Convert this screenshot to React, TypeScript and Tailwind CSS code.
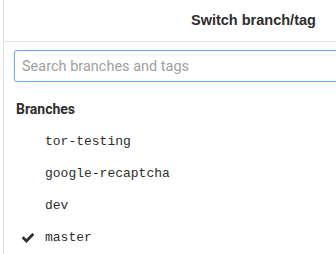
import React from 'react';

const branches = [
  { name: 'tor-testing', active: false },
  { name: 'google-recaptcha', active: false },
  { name: 'dev', active: false },
  { name: 'master', active: true },
];

// Desplegable de ramas/tags recortado por la derecha
export default function App() {
  return (
    <div className="w-[336px] h-[254px] bg-white overflow-hidden">
      <div className="ml-[3px] w-[500px] h-full border-l border-[#dfdfdf] text-[#2e2e2e]">
        {/* Cabecera */}
        <div className="h-[42px] border-b border-[#e5e5e5] flex items-center pl-[187px]">
          <span className="text-[14.5px] font-bold font-['Liberation_Sans',sans-serif]">Switch branch/tag</span>
        </div>

        {/* Buscador */}
        <div className="pt-[8px] pl-[10px]">
          <input
            type="text"
            placeholder="Search branches and tags"
            className="w-[480px] h-[32px] rounded-[3px] border border-[#73afea] px-[7px] text-[14.5px] font-['Roboto',sans-serif] placeholder:text-[#a0a0a0] outline-none shadow-[0_0_2px_rgba(115,175,234,0.4)]"
          />
        </div>

        {/* Lista */}
        <div className="pt-[17px] font-['Roboto',sans-serif]">
          <div className="pl-[12px] text-[14px] font-bold h-[20px] leading-[20px]">Branches</div>
          <ul className="pt-[7px]">
            {branches.map((b) => (
              <li key={b.name} className="h-[32px] flex items-center pl-[18px]">
                <span className="w-[23px] flex items-center">
                  {b.active && (
                    <svg width="12" height="10" viewBox="0 0 12 10" fill="none">
                      <path d="M1.6 5.2 L4.4 8 L10.4 1.9" stroke="#2e2e2e" strokeWidth="2.8" strokeLinecap="square" />
                    </svg>
                  )}
                </span>
                <span className="text-[13px] font-['Liberation_Mono',monospace]">{b.name}</span>
              </li>
            ))}
          </ul>
        </div>
      </div>
    </div>
  );
}
